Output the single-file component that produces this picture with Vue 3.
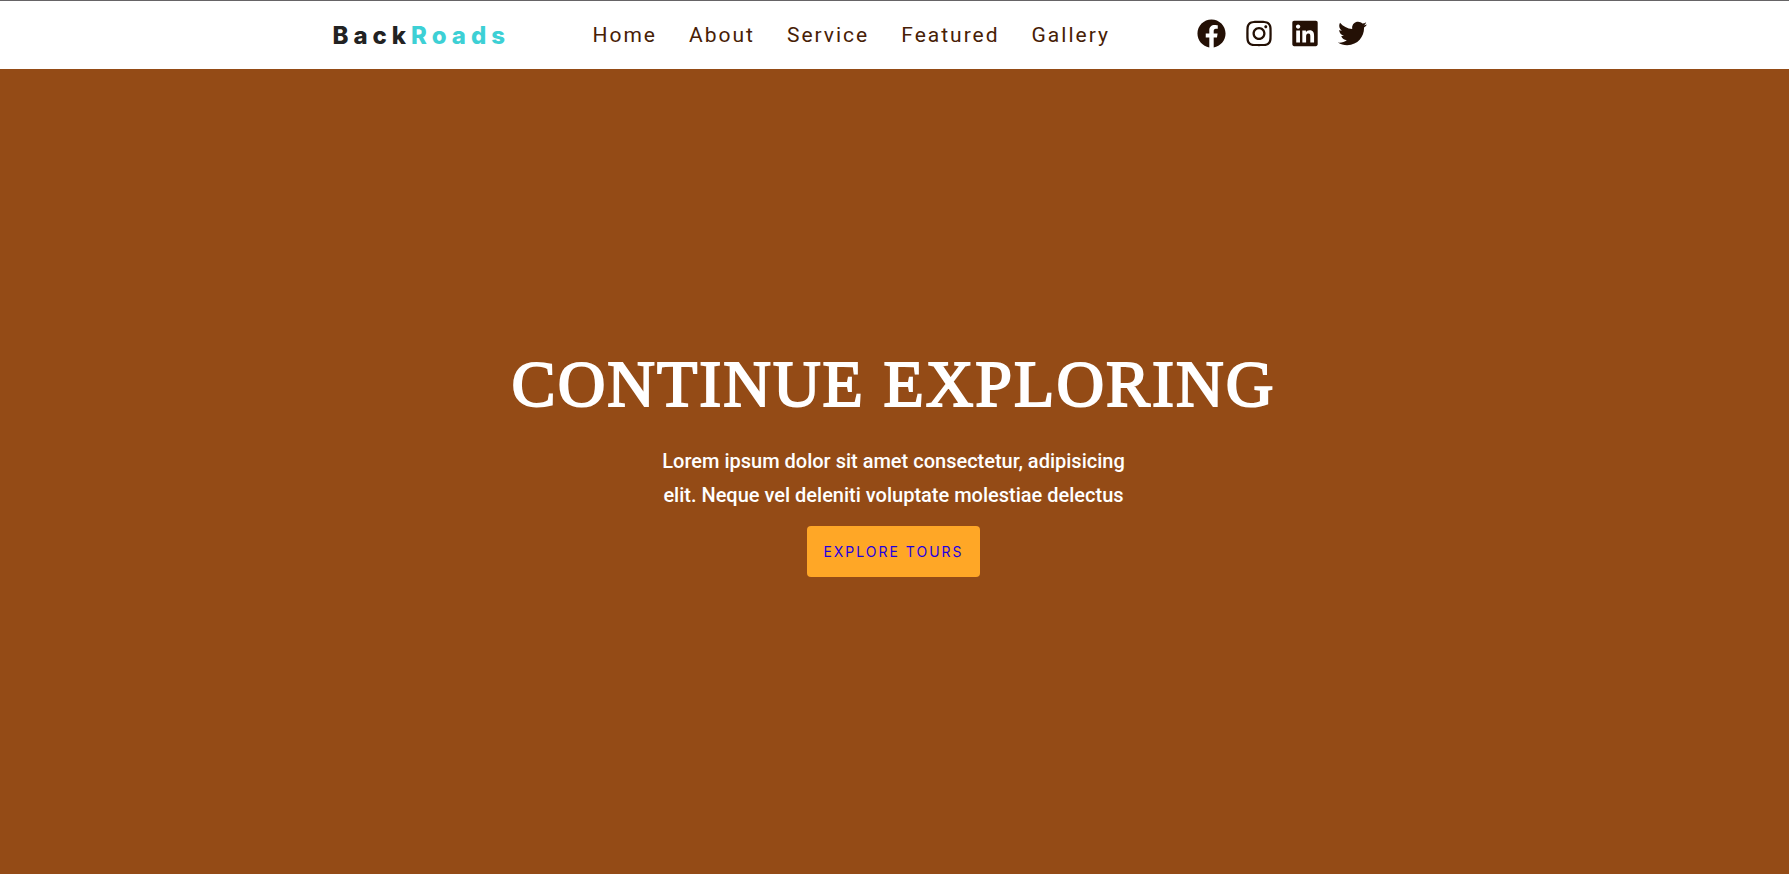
<script setup>
const links = ['Home', 'About', 'Service', 'Featured', 'Gallery']

const socials = [
  {
    name: 'Facebook',
    box: '0 0 512 512',
    size: 'wide',
    path: 'M504 256C504 119 393 8 256 8S8 119 8 256c0 123.800 90.700 226.400 209.300 245V327.700h-63V256h63v-54.600c0-62.200 37-96.500 93.700-96.500 27.100 0 55.500 4.800 55.500 4.800v61h-31.300c-30.800 0-40.400 19.100-40.400 38.700V256h68.800l-11 71.700h-57.800V501C413.300 482.400 504 379.800 504 256z',
  },
  {
    name: 'Instagram',
    box: '0 0 448 512',
    size: 'narrow',
    path: 'M224.100 141c-63.600 0-114.900 51.300-114.900 114.900s51.300 114.900 114.900 114.900S339 319.500 339 255.900 287.700 141 224.100 141zm0 189.600c-41.100 0-74.700-33.500-74.700-74.700s33.500-74.700 74.700-74.700 74.700 33.500 74.700 74.700-33.600 74.700-74.700 74.700zm146.400-194.300c0 14.900-12 26.800-26.800 26.800-14.900 0-26.800-12-26.800-26.800s12-26.800 26.800-26.800 26.800 12 26.800 26.800zm76.100 27.200c-1.700-35.900-9.900-67.700-36.200-93.900-26.200-26.200-58-34.400-93.900-36.200-37-2.100-147.900-2.100-184.900 0-35.800 1.700-67.600 9.900-93.900 36.100s-34.400 58-36.200 93.900c-2.100 37-2.100 147.900 0 184.900 1.700 35.900 9.900 67.700 36.200 93.900s58 34.400 93.900 36.200c37 2.100 147.900 2.100 184.900 0 35.900-1.700 67.700-9.900 93.900-36.200 26.200-26.200 34.400-58 36.200-93.900 2.100-37 2.100-147.800 0-184.800zM398.800 388c-7.800 19.600-22.900 34.700-42.600 42.600-29.500 11.700-99.500 9-132.100 9s-102.700 2.600-132.100-9c-19.600-7.800-34.700-22.900-42.600-42.600-11.700-29.500-9-99.500-9-132.100s-2.600-102.700 9-132.100c7.800-19.600 22.900-34.700 42.600-42.600 29.500-11.700 99.500-9 132.100-9s102.700-2.600 132.100 9c19.600 7.800 34.700 22.900 42.600 42.600 11.700 29.500 9 99.500 9 132.100s2.700 102.700-9 132.100z',
  },
  {
    name: 'LinkedIn',
    box: '0 0 448 512',
    size: 'narrow',
    path: 'M416 32H31.900C14.300 32 0 46.500 0 64.300v383.400C0 465.500 14.300 480 31.900 480H416c17.600 0 32-14.500 32-32.300V64.300c0-17.800-14.400-32.300-32-32.300zM135.400 416H69V202.200h66.500V416zm-33.200-243c-21.300 0-38.500-17.300-38.500-38.500S80.900 96 102.200 96c21.200 0 38.500 17.300 38.500 38.500 0 21.300-17.200 38.500-38.500 38.500zm282.100 243h-66.400V312c0-24.800-.5-56.700-34.500-56.700-34.600 0-39.900 27-39.900 54.900V416h-66.400V202.200h63.700v29.200h.9c8.900-16.800 30.600-34.500 62.900-34.500 67.200 0 79.700 44.300 79.700 101.900V416z',
  },
  {
    name: 'Twitter',
    box: '0 0 512 512',
    size: 'wide',
    path: 'M459.370 151.716c.325 4.548.325 9.097.325 13.645 0 138.720-105.583 298.558-298.558 298.558-59.452 0-114.680-17.219-161.137-47.106 8.447.974 16.568 1.299 25.340 1.299 49.055 0 94.213-16.568 130.274-44.832-46.132-.975-84.792-31.188-98.112-72.772 6.498.974 12.995 1.624 19.818 1.624 9.421 0 18.843-1.300 27.614-3.573-48.081-9.747-84.143-51.980-84.143-102.985v-1.299c13.969 7.797 30.214 12.670 47.431 13.319-28.264-18.843-46.781-51.005-46.781-87.391 0-19.492 5.197-37.360 14.294-52.954 51.655 63.675 129.300 105.258 216.365 109.807-1.624-7.797-2.599-15.918-2.599-24.040 0-57.828 46.782-104.934 104.934-104.934 30.213 0 57.502 12.670 76.670 33.137 23.715-4.548 46.456-13.320 66.599-25.340-7.798 24.366-24.366 44.833-46.132 57.827 21.117-2.273 41.584-8.122 60.426-16.243-14.292 20.791-32.161 39.308-52.628 54.253z',
  },
]
</script>

<template>
  <div class="page">
    <header class="navbar">
      <div class="nav-center">
        <a href="#home" class="logo">Back<span>Roads</span></a>
        <nav aria-label="Main">
          <ul class="nav-links">
            <li v-for="link in links" :key="link">
              <a :href="'#' + link.toLowerCase()">{{ link }}</a>
            </li>
          </ul>
        </nav>
        <ul class="socials">
          <li v-for="s in socials" :key="s.name">
            <a :href="'#' + s.name.toLowerCase()" :aria-label="s.name">
              <svg :viewBox="s.box" :class="s.size" aria-hidden="true">
                <path :d="s.path" fill="currentColor" />
              </svg>
            </a>
          </li>
        </ul>
      </div>
    </header>
    <main class="hero">
      <h1>CONTINUE EXPLORING</h1>
      <p>Lorem ipsum dolor sit amet consectetur, adipisicing elit. Neque vel deleniti voluptate molestiae delectus</p>
      <a href="#tours" class="btn">EXPLORE TOURS</a>
    </main>
  </div>
</template>

<style>
body {
  margin: 0;
}
</style>

<style scoped>
.page {
  box-sizing: border-box;
  min-height: 100vh;
  display: flex;
  flex-direction: column;
  border-top: 1px solid #666466;
  background: #944b16;
  font-family: Roboto, "Liberation Sans", sans-serif;
}

a {
  text-decoration: none;
}

ul {
  list-style: none;
  margin: 0;
  padding: 0;
}

.navbar {
  background: #fff;
  padding: 0 24px;
}

.nav-center {
  max-width: 1124px;
  height: 68px;
  margin: 0 auto;
  display: grid;
  grid-template-columns: 260px 604px auto;
  justify-content: start;
  align-items: center;
}

.logo {
  font-family: Inter, sans-serif;
  font-size: 24px;
  font-weight: 800;
  letter-spacing: 5px;
  color: #222;
}

.logo span {
  color: #3dd0d5;
}

.nav-links {
  display: flex;
  gap: 32px;
}

.nav-links a {
  font-size: 21px;
  letter-spacing: 2px;
  color: #472005;
}

.socials {
  display: flex;
  gap: 20px;
  padding-bottom: 4px;
}

.socials a {
  display: flex;
  color: #241005;
}

.socials svg {
  height: 29px;
}

.wide {
  width: 29px;
}

.narrow {
  width: 26px;
}

.hero {
  flex: 1;
  display: flex;
  flex-direction: column;
  align-items: center;
  justify-content: center;
  padding: 0 2px 22px 0;
  text-align: center;
  color: #fff;
}

h1 {
  margin: 0 0 20px;
  font-family: "Liberation Serif", serif;
  font-size: 66px;
  font-weight: 400;
  line-height: 80px;
  letter-spacing: 2px;
  -webkit-text-stroke: 2px #fff;
}

p {
  max-width: 480px;
  margin: 0 0 14px;
  font-size: 20px;
  font-weight: 500;
  line-height: 34px;
}

.btn {
  padding: 16px;
  border-radius: 4px;
  background: #ffa726;
  color: #1f00e0;
  font-family: Inter, sans-serif;
  font-size: 14px;
  line-height: 19px;
  letter-spacing: 2px;
}
</style>
